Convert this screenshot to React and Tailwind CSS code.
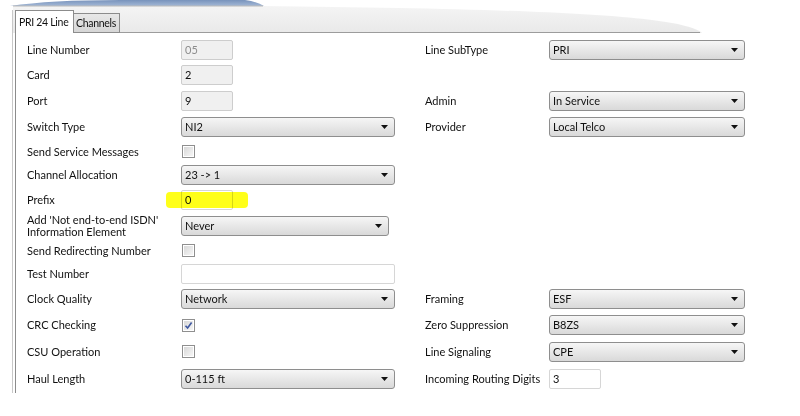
import React from 'react'

const Arrow = () => (
  <svg width="7" height="4" viewBox="0 0 7 4" className="shrink-0">
    <path d="M0 0 H7 L3.5 4 Z" fill="#111" />
  </svg>
)

const Select = ({ value, w }) => (
  <div
    className={`flex items-center justify-between h-[20px] rounded-[3px] border border-[#8e8e8e] bg-linear-to-b from-[#f6f6f6] to-[#d9d9d9] pl-[3px] pr-[6px] ${w}`}
  >
    <span>{value}</span>
    <Arrow />
  </div>
)

const Input = ({ value, w, disabled, muted }) => (
  <div
    className={`flex items-center h-[20px] rounded-[2px] border pl-[3px] ${w} ${
      disabled ? 'bg-[#f0f0f0] border-[#cdcdcd]' : 'bg-white border-[#d6d6d6]'
    } ${muted ? 'text-[#8c8c8c]' : ''}`}
  >
    {value}
  </div>
)

const Checkbox = ({ checked }) => (
  <div className="ml-[1px] w-[13px] h-[13px] border border-[#8f8f8f] bg-white p-[1px]">
    <div className="w-full h-full flex items-center justify-center bg-linear-to-br from-[#d8d8d8] to-[#f6f6f6]">
      {checked && (
        <svg width="9" height="9" viewBox="0 0 9 9">
          <path d="M1.5 4.8 L3.6 7 L7.6 1.5" fill="none" stroke="#3f58a0" strokeWidth="1.6" />
        </svg>
      )}
    </div>
  </div>
)

const Prefix = () => (
  <div className="relative">
    <Input value="0" w="w-[52px]" />
    <span className="absolute left-[-15px] top-[2px] w-[82px] h-[16px] rounded-[4px] bg-[#ffff1a] mix-blend-multiply" />
  </div>
)

const rows = [
  { h: 'h-[25px]', l: 'Line Number', lc: <Input value="05" w="w-[52px]" disabled muted />, r: 'Line SubType', rc: <Select value="PRI" w="w-[196px]" /> },
  { h: 'h-[26px]', l: 'Card', lc: <Input value="2" w="w-[52px]" disabled /> },
  { h: 'h-[26px]', l: 'Port', lc: <Input value="9" w="w-[52px]" disabled />, r: 'Admin', rc: <Select value="In Service" w="w-[196px]" /> },
  { h: 'h-[26px]', l: 'Switch Type', lc: <Select value="NI2" w="w-[214px]" />, r: 'Provider', rc: <Select value="Local Telco" w="w-[196px]" /> },
  { h: 'h-[23px]', l: 'Send Service Messages', lc: <Checkbox /> },
  { h: 'h-[24px]', l: 'Channel Allocation', lc: <Select value="23 -> 1" w="w-[214px]" /> },
  { h: 'h-[26px]', l: 'Prefix', lc: <Prefix /> },
  { h: 'h-[26px]', l: <>Add 'Not end-to-end ISDN'<br />Information Element</>, lc: <Select value="Never" w="w-[208px]" /> },
  { h: 'h-[23px]', l: 'Send Redirecting Number', lc: <Checkbox /> },
  { h: 'h-[24px]', l: 'Test Number', lc: <Input value="" w="w-[214px]" /> },
  { h: 'h-[26px]', l: 'Clock Quality', lc: <Select value="Network" w="w-[214px]" />, r: 'Framing', rc: <Select value="ESF" w="w-[196px]" /> },
  { h: 'h-[26px]', l: 'CRC Checking', lc: <Checkbox checked />, r: 'Zero Suppression', rc: <Select value="B8ZS" w="w-[196px]" /> },
  { h: 'h-[27px]', l: 'CSU Operation', lc: <Checkbox />, r: 'Line Signaling', rc: <Select value="CPE" w="w-[196px]" /> },
  { h: 'h-[27px]', l: 'Haul Length', lc: <Select value="0-115 ft" w="w-[214px]" />, r: 'Incoming Routing Digits', rc: <Input value="3" w="w-[52px]" /> },
]

export default function App() {
  return (
    <div className="relative w-[800px] h-[416px] overflow-hidden bg-white text-[#111] text-[11px] leading-[12px] font-['Lato','Liberation_Sans',sans-serif]">
      {/* warped top edge of the window */}
      <svg className="absolute left-0 top-0" width="800" height="34" viewBox="0 0 800 34">
        <defs>
          <linearGradient id="grey" x1="0" y1="0" x2="0" y2="1">
            <stop offset="0" stopColor="#f4f4f4" />
            <stop offset="1" stopColor="#e9e9e9" />
          </linearGradient>
          <linearGradient id="blue" x1="0" y1="0" x2="0" y2="1">
            <stop offset="0" stopColor="#7893bc" />
            <stop offset="1" stopColor="#a3b8d6" />
          </linearGradient>
        </defs>
        <path d="M13 6 L263 6 C520 9 680 14 702 33 L13 33 Z" fill="url(#grey)" />
        <path d="M10 6 Q50 0 120 0 L245 0 Q258 2 264 6 Z" fill="url(#blue)" />
        <path d="M13 6 L263 6" stroke="#b9b9b9" strokeWidth="1" />
      </svg>

      <div className="relative ml-[12px] mt-[10px] border-l border-[#c8c8c8] pl-[2px]">
        {/* tab strip */}
        <div className="flex items-end h-[23px] whitespace-nowrap text-[10.5px] tracking-[-0.3px]">
          <div className="h-[23px] w-[59px] flex items-center pl-[3px] bg-white border border-b-0 border-[#8c8c8c]">
            PRI 24 Line
          </div>
          <div className="h-[20px] w-[47px] flex items-center pl-[2px] -ml-[1px] bg-linear-to-b from-[#e8e8e8] to-[#d6d6d6] border border-[#8c8c8c]">
            Channels
          </div>
          <div className="w-[580px] border-b border-[#9c9c9c]" />
        </div>

        {/* tab content */}
        <div className="h-[360px] border-l border-[#8c8c8c] pl-[11px] pt-[4px]">
          {rows.map((row, i) => (
            <div key={i} className={`flex items-center ${row.h}`}>
              <div className="w-[398px] flex items-center">
                <div className="w-[154px]">{row.l}</div>
                {row.lc}
              </div>
              {row.r && (
                <div className="flex items-center">
                  <div className="w-[124px]">{row.r}</div>
                  {row.rc}
                </div>
              )}
            </div>
          ))}
        </div>
      </div>
    </div>
  )
}
